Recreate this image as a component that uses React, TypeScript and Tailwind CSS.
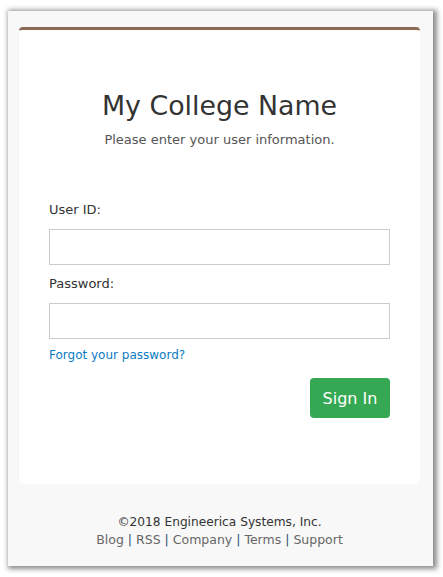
import React from "react";

const font = { fontFamily: '"DejaVu Sans", Verdana, sans-serif' };

const FooterLinks: React.FC = () => {
  const links = ["Blog", "RSS", "Company", "Terms", "Support"];
  return (
    <div className="text-[12.5px] leading-[17px]">
      {links.map((l, i) => (
        <React.Fragment key={l}>
          {i > 0 && <span className="text-[#2f4f6f]"> | </span>}
          <a href="#" className="text-[#666]">
            {l}
          </a>
        </React.Fragment>
      ))}
    </div>
  );
};

export default function App() {
  return (
    <div className="min-h-[577px] w-[443px] bg-white pl-[8px] pt-[11px]" style={font}>
      <div className="flex h-[555px] w-[425px] flex-col bg-[#f8f8f8] pl-[11px] pr-[13px] pt-[16px] shadow-[2px_1px_5px_2px_rgba(0,0,0,0.45)]">
        {/* login card */}
        <div className="rounded-[4px] border-t-[3px] border-[#8b6a56] bg-white px-[30px] pb-[66px] pt-[59px] shadow-[0_0_1px_rgba(0,0,0,0.08)]">
          <h1 className="pt-px text-center text-[26.8px] leading-[32px] text-[#333]">My College Name</h1>
          <p className="mt-[9px] text-center text-[13px] leading-[18px] text-[#555]">
            Please enter your user information.
          </p>

          <label className="mt-[51px] block pt-px text-[13px] leading-[18px] text-[#333]">User ID:</label>
          <input
            type="text"
            className="mt-[10px] block h-[36px] w-full border border-[#ccc] bg-white px-2 outline-none"
          />

          <label className="mt-[9px] block pt-px text-[13px] leading-[18px] text-[#333]">Password:</label>
          <input
            type="password"
            className="mt-[10px] block h-[36px] w-full border border-[#ccc] bg-white px-2 outline-none"
          />

          <a href="#" className="mt-[8px] block text-[12px] leading-[16px] text-[#0a7bc4]">
            Forgot your password?
          </a>

          <div className="mt-[15px] flex justify-end">
            <button className="h-[40px] w-[80px] rounded-[4px] bg-[#35a853] pt-px text-[16px] text-white">
              Sign In
            </button>
          </div>
        </div>

        {/* footer */}
        <div className="mt-[30px] text-center">
          <div className="text-[12.2px] leading-[17px] text-[#333]">©2018 Engineerica Systems, Inc.</div>
          <FooterLinks />
        </div>
      </div>
    </div>
  );
}
